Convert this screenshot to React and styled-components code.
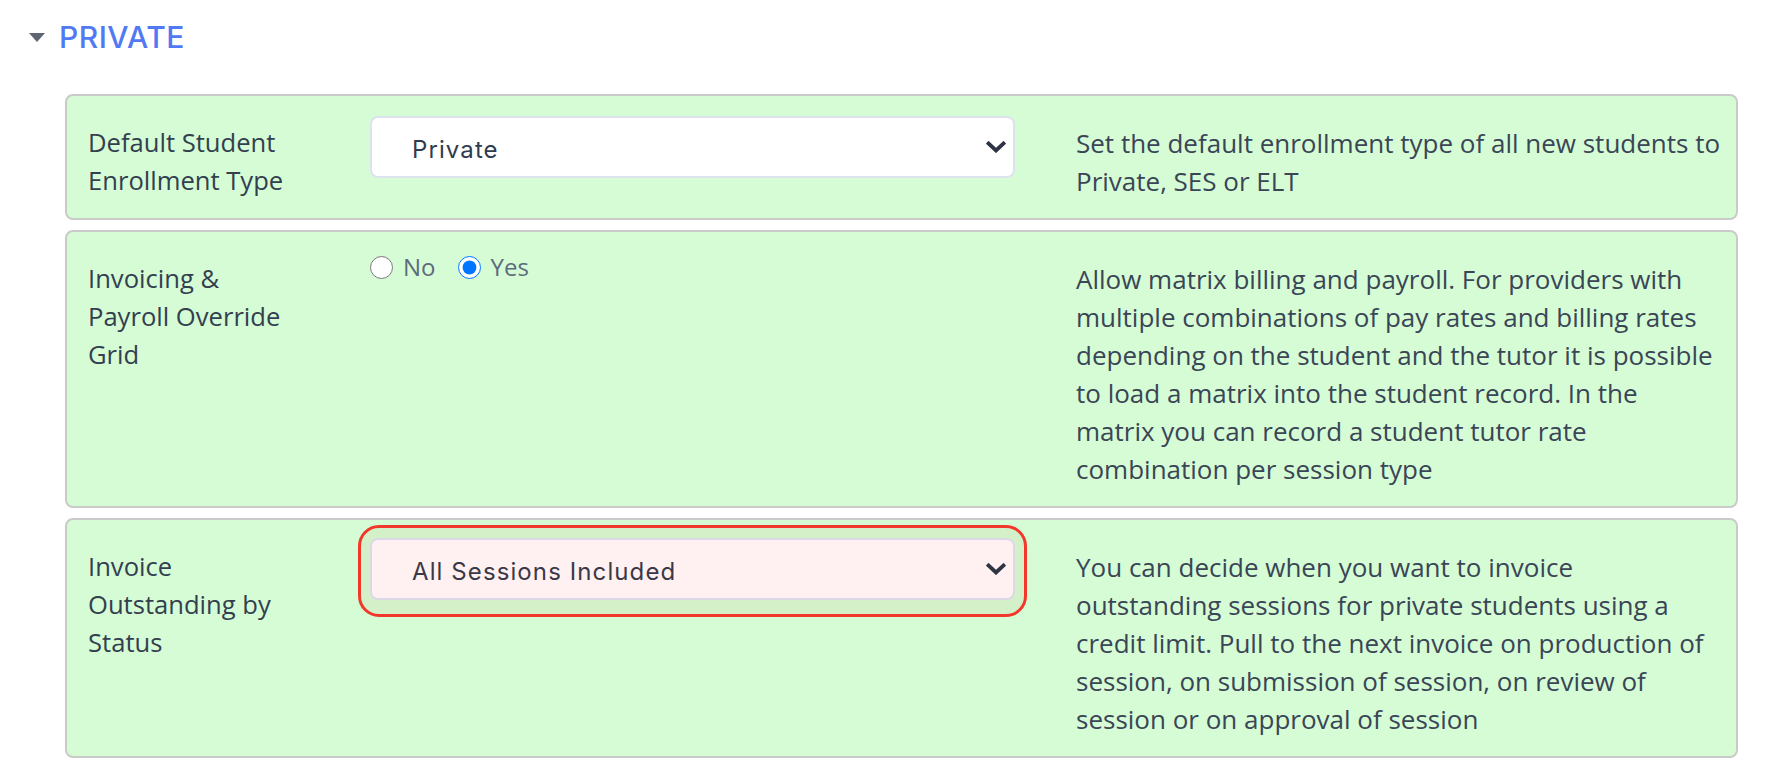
import React from 'react';
import styled, { createGlobalStyle } from 'styled-components';

const GlobalStyle = createGlobalStyle`
  html, body {
    margin: 0;
    background: #ffffff;
  }
  body {
    font-family: "Open Sans", "Noto Sans", sans-serif;
  }
`;

const Page = styled.div`
  padding: 14px 30px 0 29px;
`;

const SectionHeader = styled.div`
  display: flex;
  align-items: center;
  gap: 14px;
  height: 46px;
`;

const Title = styled.h2`
  margin: 0;
  font-family: Inter, "Noto Sans", sans-serif;
  font-weight: 500;
  font-size: 30px;
  line-height: 1;
  letter-spacing: 0.5px;
  color: #5179f3;
`;

const CardList = styled.div`
  display: flex;
  flex-direction: column;
  gap: 10px;
  margin: 34px 0 0 36px;
`;

const Card = styled.div`
  display: grid;
  grid-template-columns: 282px 706px 1fr;
  align-items: start;
  padding: 28px 12px 18px 21px;
  background: #d5fcd5;
  border: 2px solid #c9cbc9;
  border-radius: 8px;
`;

const Label = styled.div`
  max-width: 215px;
  font-size: 25.6px;
  line-height: 38px;
  color: #333f4f;
`;

const Description = styled.div`
  max-width: 645px;
  font-size: 26px;
  line-height: 38px;
  color: #3a4555;
`;

const FocusRing = styled.div`
  width: 645px;
  margin-top: -8px;
  border-radius: 21px;

  ${p =>
    p.$invalid &&
    `
    margin: -23px 0 0 -12px;
    padding: 10px 9px 14px 9px;
    border: 3px solid #f2382b;
    background: #d3f0c8;
  `}
`;

const SelectBox = styled.div`
  position: relative;
`;

const Select = styled.select`
  appearance: none;
  -webkit-appearance: none;
  display: block;
  width: 100%;
  height: 62px;
  padding: 4px 50px 0 40px;
  font-family: Inter, "Noto Sans", sans-serif;
  font-size: 24px;
  letter-spacing: 1.1px;
  color: ${p => (p.$invalid ? '#3b3848' : '#2f3b4e')};
  background: ${p => (p.$invalid ? '#fff1f1' : '#ffffff')};
  border: 2px solid ${p => (p.$invalid ? '#dcd8e6' : '#dde2ef')};
  border-radius: 8px;
  outline: none;
`;

const Chevron = styled.svg`
  position: absolute;
  right: 9px;
  top: 50%;
  transform: translateY(-50%);
  pointer-events: none;
`;

const RadioRow = styled.div`
  display: flex;
  align-items: center;
  gap: 22px;
  margin-top: -5px;
`;

const RadioOption = styled.label`
  display: flex;
  align-items: center;
  gap: 10px;
  font-size: 24px;
  line-height: 24px;
  color: #5d6b7c;
`;

const Radio = styled.input`
  width: 23px;
  height: 23px;
  margin: 0;
`;

const ChevronIcon = () => (
  <Chevron width="20" height="12" viewBox="0 0 20 12">
    <path d="M2.5 2.5 L10 9.5 L17.5 2.5" fill="none" stroke="#2e3542" strokeWidth="3.8" strokeLinecap="square" />
  </Chevron>
);

const SelectField = ({ value, options, invalid }) => (
  <FocusRing $invalid={invalid}>
    <SelectBox>
      <Select defaultValue={value} $invalid={invalid}>
        {options.map(o => (
          <option key={o} value={o}>{o}</option>
        ))}
      </Select>
      <ChevronIcon />
    </SelectBox>
  </FocusRing>
);

export default function App() {
  return (
    <>
      <GlobalStyle />
      <Page>
        <SectionHeader>
          <svg width="16" height="9" viewBox="0 0 16 9">
            <path d="M0 0 H16 L8 9 Z" fill="#5f6671" />
          </svg>
          <Title>PRIVATE</Title>
        </SectionHeader>

        <CardList>
          <Card>
            <Label>Default Student Enrollment Type</Label>
            <SelectField value="Private" options={['Private', 'SES', 'ELT']} />
            <Description>Set the default enrollment type of all new students to Private, SES or ELT</Description>
          </Card>

          <Card>
            <Label>Invoicing &amp; Payroll Override Grid</Label>
            <RadioRow>
              <RadioOption>
                <Radio type="radio" name="override" value="no" />
                No
              </RadioOption>
              <RadioOption>
                <Radio type="radio" name="override" value="yes" defaultChecked />
                Yes
              </RadioOption>
            </RadioRow>
            <Description>
              Allow matrix billing and payroll. For providers with multiple combinations of pay rates and billing rates
              depending on the student and the tutor it is possible to load a matrix into the student record. In the
              matrix you can record a student tutor rate combination per session type
            </Description>
          </Card>

          <Card>
            <Label>Invoice Outstanding by Status</Label>
            <SelectField
              value="All Sessions Included"
              options={['All Sessions Included', 'On Production', 'On Submission', 'On Review', 'On Approval']}
              invalid
            />
            <Description>
              You can decide when you want to invoice outstanding sessions for private students using a credit limit.
              Pull to the next invoice on production of session, on submission of session, on review of session or on
              approval of session
            </Description>
          </Card>
        </CardList>
      </Page>
    </>
  );
}
